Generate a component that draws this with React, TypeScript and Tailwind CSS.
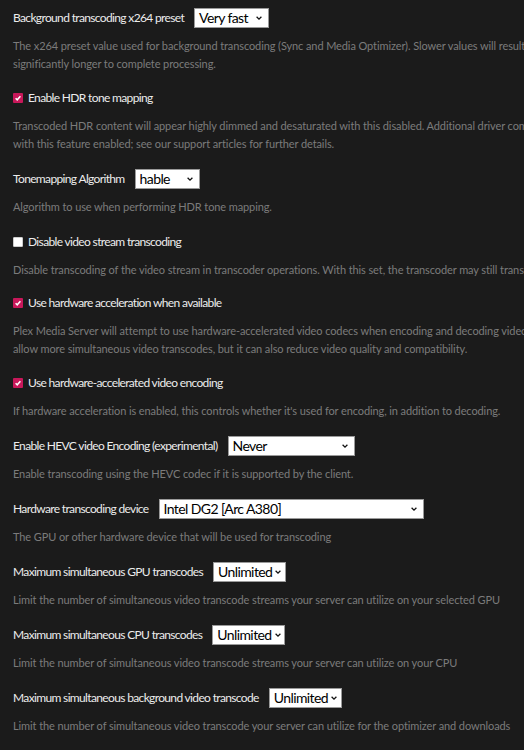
import type { ReactNode } from 'react'

const FONT = { fontFamily: 'Lato, "Noto Sans", sans-serif' }

function Chevron() {
  return (
    <svg className="h-[8px] w-[8px] shrink-0" viewBox="0 0 10 10" fill="none" stroke="#111" strokeWidth="1.6">
      <path d="M2 3.5l3 3 3-3" />
    </svg>
  )
}

function Select({ value, width }: { value: string; width: string }) {
  return (
    <div
      className={`flex h-[20px] shrink-0 items-center justify-between gap-[2px] border border-[#9a9a9a] bg-white pl-[4px] pr-[5px] text-[14px] leading-none tracking-[-0.6px] text-black ${width}`}
    >
      <span className="whitespace-nowrap">{value}</span>
      <Chevron />
    </div>
  )
}

function Checkbox({ checked }: { checked: boolean }) {
  return checked ? (
    <span className="flex h-[10px] w-[10px] shrink-0 items-center justify-center rounded-[1px] bg-[#c8185a]">
      <svg className="h-[8px] w-[8px]" viewBox="0 0 10 10" fill="none" stroke="#fff" strokeWidth="1.9">
        <path d="M2 5.3l2 2 4-4.6" />
      </svg>
    </span>
  ) : (
    <span className="h-[10px] w-[10px] shrink-0 rounded-[1px] border border-[#ccc] bg-white" />
  )
}

function Setting({ label, lines, shift = '' }: { label: ReactNode; lines: string[]; shift?: string }) {
  return (
    <div className={`flex flex-col ${shift}`}>
      <div className="flex h-[20px] items-center gap-[10px] text-[12px] tracking-[-0.65px] text-[#ececec]">{label}</div>
      <div className="mt-[9px] flex flex-col text-[11px] leading-[18px] tracking-[-0.1px] text-[#7b7b7b]">
        {lines.map((l) => (
          <p key={l} className="whitespace-nowrap">
            {l}
          </p>
        ))}
      </div>
    </div>
  )
}

function Check({ checked, text }: { checked: boolean; text: string }) {
  return (
    <span className="flex items-center gap-[5px]">
      <Checkbox checked={checked} />
      <span>{text}</span>
    </span>
  )
}

export default function App() {
  return (
    <div className="min-h-screen w-full overflow-hidden bg-[#1b1b1b] pl-[13px] pt-[8px]" style={FONT}>
      <div className="flex flex-col gap-[16px]">
        <Setting
          label={
            <>
              <span>Background transcoding x264 preset</span>
              <Select value="Very fast" width="w-[75px]" />
            </>
          }
          lines={[
            'The x264 preset value used for background transcoding (Sync and Media Optimizer). Slower values will result in better video quality',
            'significantly longer to complete processing.',
          ]}
        />
        <Setting
          shift="-mt-[1px]"
          label={<Check checked text="Enable HDR tone mapping" />}
          lines={[
            'Transcoded HDR content will appear highly dimmed and desaturated with this disabled. Additional driver components may be required',
            'with this feature enabled; see our support articles for further details.',
          ]}
        />
        <Setting
          label={
            <>
              <span>Tonemapping Algorithm</span>
              <Select value="hable" width="w-[65px]" />
            </>
          }
          lines={['Algorithm to use when performing HDR tone mapping.']}
        />
        <Setting
          label={<Check checked={false} text="Disable video stream transcoding" />}
          lines={['Disable transcoding of the video stream in transcoder operations. With this set, the transcoder may still transcode audio']}
        />
        <Setting
          shift="-mt-[2px]"
          label={<Check checked text="Use hardware acceleration when available" />}
          lines={[
            'Plex Media Server will attempt to use hardware-accelerated video codecs when encoding and decoding video. Hardware acceleration can',
            'allow more simultaneous video transcodes, but it can also reduce video quality and compatibility.',
          ]}
        />
        <Setting
          shift="-mt-[1px]"
          label={<Check checked text="Use hardware-accelerated video encoding" />}
          lines={["If hardware acceleration is enabled, this controls whether it's used for encoding, in addition to decoding."]}
        />
        <Setting
          label={
            <>
              <span>Enable HEVC video Encoding (experimental)</span>
              <Select value="Never" width="w-[127px]" />
            </>
          }
          lines={['Enable transcoding using the HEVC codec if it is supported by the client.']}
        />
        <Setting
          label={
            <>
              <span>Hardware transcoding device</span>
              <Select value="Intel DG2 [Arc A380]" width="w-[265px]" />
            </>
          }
          lines={['The GPU or other hardware device that will be used for transcoding']}
        />
        <Setting
          label={
            <>
              <span>Maximum simultaneous GPU transcodes</span>
              <Select value="Unlimited" width="w-[73px]" />
            </>
          }
          lines={['Limit the number of simultaneous video transcode streams your server can utilize on your selected GPU']}
        />
        <Setting
          label={
            <>
              <span>Maximum simultaneous CPU transcodes</span>
              <Select value="Unlimited" width="w-[73px]" />
            </>
          }
          lines={['Limit the number of simultaneous video transcode streams your server can utilize on your CPU']}
        />
        <Setting
          label={
            <>
              <span>Maximum simultaneous background video transcode</span>
              <Select value="Unlimited" width="w-[73px]" />
            </>
          }
          lines={['Limit the number of simultaneous video transcode your server can utilize for the optimizer and downloads']}
        />
      </div>
    </div>
  )
}
